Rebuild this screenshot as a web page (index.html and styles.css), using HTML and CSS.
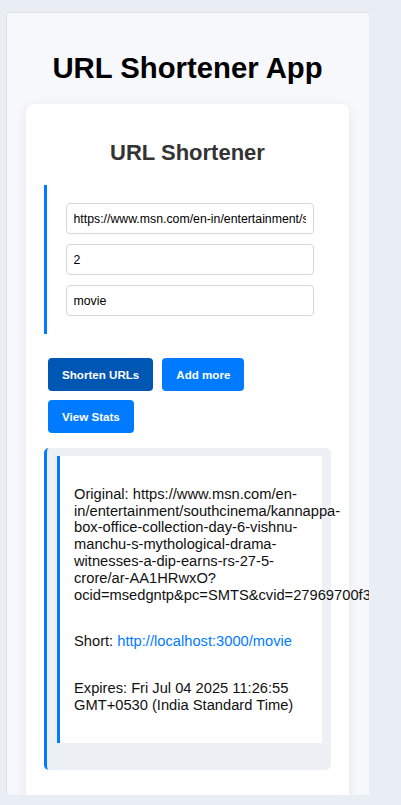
FILE: index.html
```html
<!DOCTYPE html>
<html lang="en">
<head>
<meta charset="utf-8">
<title>URL Shortener App</title>
<link rel="stylesheet" href="styles.css">
</head>
<body>
<div class="app">
  <h1 class="app-title">URL Shortener App</h1>
  <div class="card">
    <h2 class="card-title">URL Shortener</h2>
    <div class="url-group">
      <input class="field" type="text" value="https://www.msn.com/en-in/entertainment/southcinema/kannappa-box-office-collection-day-6-vishnu-manchu-s-mythological-drama-witnesses-a-dip-earns-rs-27-5-crore/ar-AA1HRwxO?ocid=msedgntp&amp;pc=SMTS&amp;cvid=27969700f3">
      <input class="field" type="text" value="2">
      <input class="field" type="text" value="movie">
    </div>
    <div class="actions">
      <button class="btn btn-active">Shorten URLs</button>
      <button class="btn">Add more</button>
      <button class="btn">View Stats</button>
    </div>
    <div class="results">
      <div class="result">
        <p class="result-line">Original: https://www.msn.com/en-in/entertainment/southcinema/kannappa-box-office-collection-day-6-vishnu-manchu-s-mythological-drama-witnesses-a-dip-earns-rs-27-5-crore/ar-AA1HRwxO?ocid=msedgntp&amp;pc=SMTS&amp;cvid=27969700f3a54d2b8c6e1f0a9d4b7e21&amp;ei=10</p>
        <p class="result-line">Short: <a class="short-link" href="#">http://localhost:3000/movie</a></p>
        <p class="result-line">Expires: Fri Jul 04 2025 11:26:55 GMT+0530 (India Standard Time)</p>
      </div>
    </div>
  </div>
</div>
</body>
</html>
```

FILE: styles.css
```css
* {
  box-sizing: border-box;
}

html, body {
  margin: 0;
  padding: 0;
}

body {
  background: #e9edf4;
  font-family: "Liberation Sans", Arial, sans-serif;
  color: #000;
  height: 805px;
  overflow: hidden;
}

.app {
  margin: 12px 0 0 6px;
  width: 363px;
  height: 783px;
  background: #f7f8fb;
  border-top: 1px solid #dde0e5;
  border-left: 1px solid #dde0e5;
  padding: 18px 20px 0 19px;
  overflow: hidden;
}

.app-title {
  margin: 19.6px 0;
  font-size: 29.3px;
  font-weight: bold;
  text-align: center;
  color: #000;
  line-height: normal;
}

.card {
  background: #fff;
  border-radius: 8px;
  box-shadow: 0 2px 12px rgba(0, 0, 0, 0.07);
  padding: 18px 18px 60px 18px;
}

.card-title {
  margin: 18.3px 0;
  font-size: 22px;
  font-weight: bold;
  color: #333;
  text-align: center;
  line-height: normal;
}

.url-group {
  border-left: 3.5px solid #007bff;
  padding: 18.5px 17px 18px 18.5px;
  display: flex;
  flex-direction: column;
  gap: 10px;
  margin-bottom: 19px;
}

.field {
  display: block;
  width: 248px;
  height: 31px;
  border: 1px solid #d7d7d7;
  border-radius: 4px;
  padding: 0 7px;
  font-family: "Liberation Sans", Arial, sans-serif;
  font-size: 12.3px;
  color: #000;
  background: #fff;
  outline: none;
}

.actions {
  display: flex;
  flex-wrap: wrap;
  gap: 9px;
  padding: 4.5px 0 4.5px 4px;
}

.btn {
  height: 33px;
  padding: 0 14px;
  border: none;
  border-radius: 4px;
  background: #007bff;
  color: #fff;
  font-family: "Liberation Sans", Arial, sans-serif;
  font-size: 11.6px;
  font-weight: bold;
  cursor: pointer;
}

.btn-active {
  background: #0056b3;
}

.results {
  margin-top: 10.5px;
  background: #edf1f6;
  border-left: 3.5px solid #007bff;
  border-radius: 5px;
  padding: 8.5px 9px 27px 9.5px;
}

.result {
  background: #fff;
  border-left: 3.5px solid #007bff;
  padding: 29.5px 14.5px;
  display: flex;
  flex-direction: column;
  gap: 30px;
}

.result-line {
  margin: 0;
  font-size: 14.7px;
  line-height: 16.8px;
  color: #111;
}

.short-link {
  color: #007bff;
  text-decoration: none;
}
```
